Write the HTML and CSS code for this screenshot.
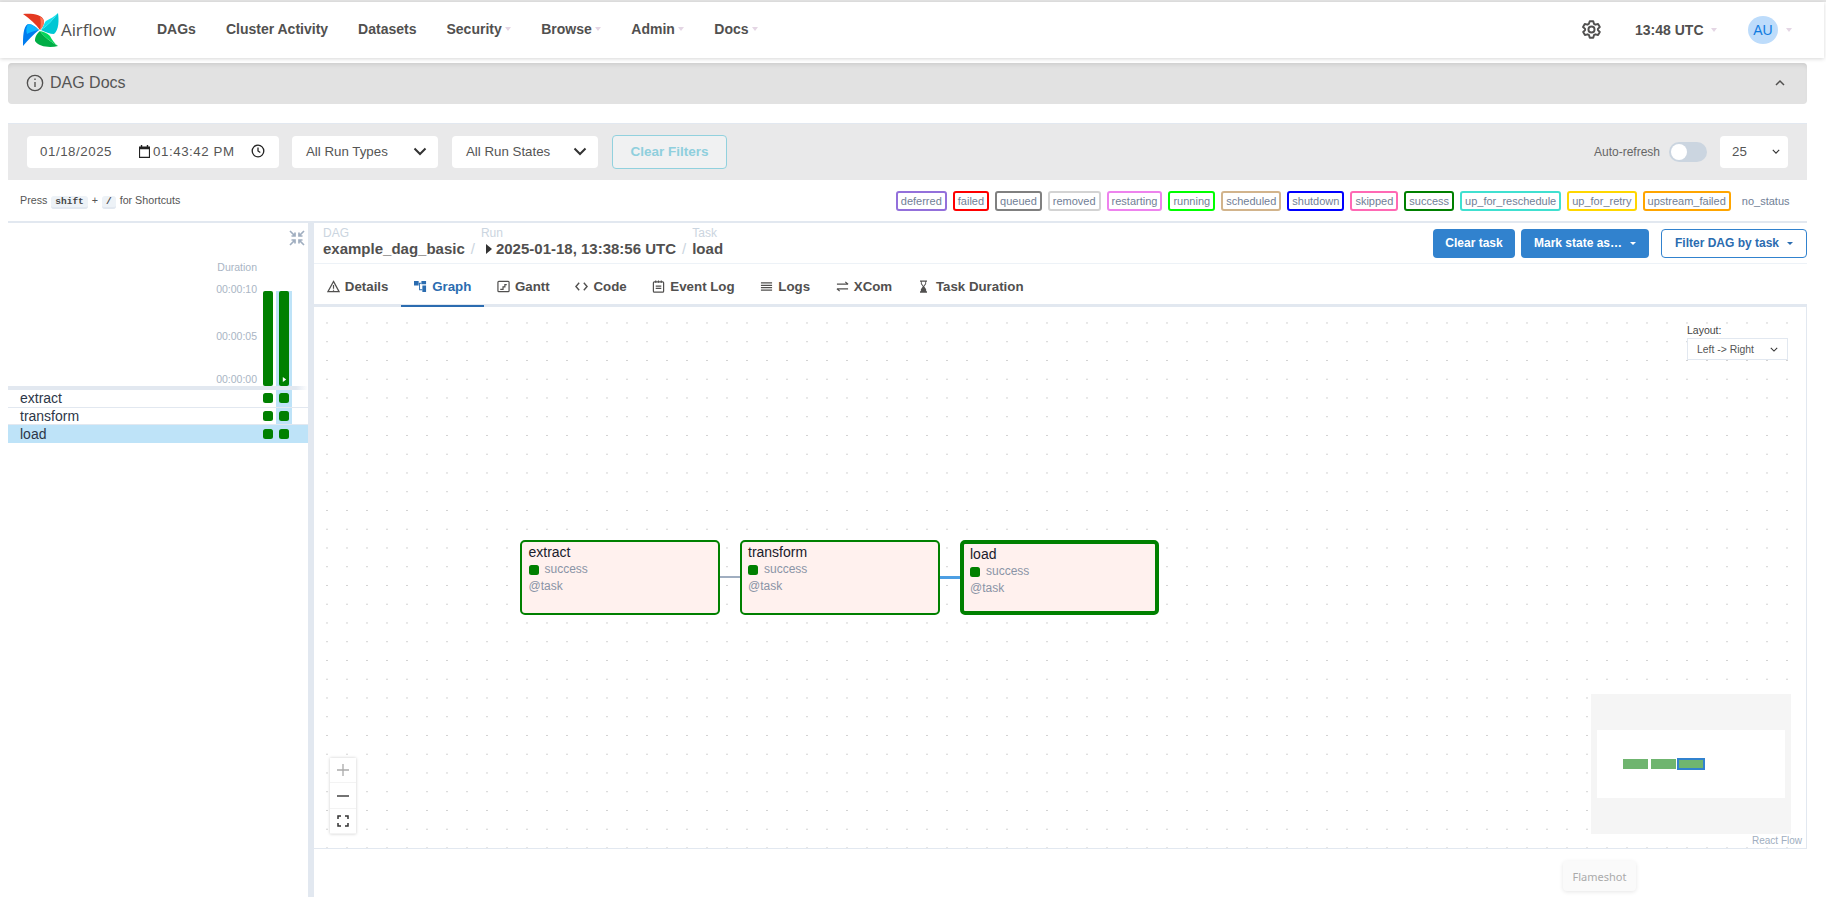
FILE: index.html
```html
<!DOCTYPE html>
<html lang="en">
<head>
<meta charset="utf-8">
<title>Airflow</title>
<link rel="stylesheet" href="styles.css">
</head>
<body>
<div class="strip"></div>
<nav class="nav">
  <a class="brand">
    <svg class="logo" viewBox="0 0 36 34">
      <path fill="#e43921" d="M0 1 C7 0 20 1 21 8 C21 11 20 14 17 17 C13 11 7 6 0 1Z"/>
      <path fill="#ff7557" d="M17 17 C20 14 21 11 21 8 C20.500 6 19 5 17 4 C18 8 18 12 17 17Z"/>
      <path fill="#00c7d4" d="M35 0 C36 7 36 17 31 21 C27 21 22 19 18 17 C24 13 30 7 35 0Z"/>
      <path fill="#11e1ee" d="M35 0 C30 7 24 13 18 17 C21 13 21 10 23 8 C27 6 32 3 35 0Z"/>
      <path fill="#00ad46" d="M35 33 C27 35 16 34 12 28 C12 25 13 21 17 18 C21 24 28 29 35 33Z"/>
      <path fill="#04d659" d="M35 33 C28 29 21 24 17 18 C21 19 24 20 27 23 C29 27 32 31 35 33Z"/>
      <path fill="#017cee" d="M0 33 C0 25 0 13 5 11 C9 11 13 14 16 17 C11 21 5 27 0 33Z"/>
      <path fill="#0cb6ff" d="M5 11 C9 11 13 14 16 17 C11 18 7 19 4 21 C3 18 3 14 5 11Z"/>
    </svg>
    <span class="brand-name">Airflow</span>
  </a>
  <ul class="menu">
    <li class="menu-item">DAGs</li>
    <li class="menu-item">Cluster Activity</li>
    <li class="menu-item">Datasets</li>
    <li class="menu-item">Security<i class="caret"></i></li>
    <li class="menu-item">Browse<i class="caret"></i></li>
    <li class="menu-item">Admin<i class="caret"></i></li>
    <li class="menu-item">Docs<i class="caret"></i></li>
  </ul>
  <div class="nav-right">
    <svg class="gear" viewBox="0 0 24 24" fill="none" stroke="#51504f" stroke-width="2.200" stroke-linejoin="round">
      <path d="M10 2.500h4l.8 3 1.700 1 3-.8 2 3.400-2.200 2.200v1.400l2.200 2.200-2 3.400-3-.8-1.700 1-.8 3h-4l-.8-3-1.700-1-3 .8-2-3.400 2.200-2.200v-1.400L2.300 9.100l2-3.400 3 .8 1.700-1z"/>
      <circle cx="12" cy="12" r="3.500"/>
    </svg>
    <span class="clock">13:48 UTC<i class="caret"></i></span>
    <span class="avatar">AU</span><i class="caret"></i>
  </div>
</nav>
<main class="main">
  <div class="docs">
    <svg class="info" viewBox="0 0 20 20" fill="none" stroke="#51504f" stroke-width="1.500"><circle cx="10" cy="10" r="8.500"/><path d="M10 9v5.500M10 5v1.700"/></svg>
    <span class="docs-title">DAG Docs</span>
    <svg class="chev-up" viewBox="0 0 12 8" fill="none" stroke="#51504f" stroke-width="1.500"><path d="M2 6l4-4 4 4"/></svg>
  </div>
  <div class="filters">
    <div class="field datetime">
      <span>01/18/2025</span>
      <svg class="cal" viewBox="0 0 12 14"><path fill="#222" d="M2 0h1.500v1.500h5V0H10v1.500h2V14H0V1.500h2zM1.200 4.500v8.300h9.600V4.500z"/></svg>
      <span class="time">01:43:42 PM</span>
      <svg class="clk" viewBox="0 0 14 14" fill="none" stroke="#222" stroke-width="1.300"><circle cx="7" cy="7" r="5.800"/><path d="M7 3.500V7l2.300 1.500"/></svg>
    </div>
    <div class="field select">All Run Types<svg class="chev" viewBox="0 0 14 9" fill="none" stroke="#333" stroke-width="2"><path d="M1.500 1.500L7 7l5.500-5.500"/></svg></div>
    <div class="field select">All Run States<svg class="chev" viewBox="0 0 14 9" fill="none" stroke="#333" stroke-width="2"><path d="M1.500 1.500L7 7l5.500-5.500"/></svg></div>
    <button class="clear-filters">Clear Filters</button>
    <span class="refresh-label">Auto-refresh</span>
    <span class="switch"><i class="knob"></i></span>
    <div class="field count">25<svg class="chev-s" viewBox="0 0 10 6" fill="none" stroke="#333" stroke-width="1.400"><path d="M1 1l4 4 4-4"/></svg></div>
  </div>
  <div class="legend-row">
    <div class="shortcut">Press <kbd>shift</kbd> + <kbd>/</kbd> for Shortcuts</div>
    <div class="legend">
      <span class="st st-deferred">deferred</span>
      <span class="st st-failed">failed</span>
      <span class="st st-queued">queued</span>
      <span class="st st-removed">removed</span>
      <span class="st st-restarting">restarting</span>
      <span class="st st-running">running</span>
      <span class="st st-scheduled">scheduled</span>
      <span class="st st-shutdown">shutdown</span>
      <span class="st st-skipped">skipped</span>
      <span class="st st-success">success</span>
      <span class="st st-reschedule">up_for_reschedule</span>
      <span class="st st-retry">up_for_retry</span>
      <span class="st st-upstream">upstream_failed</span>
      <span class="st st-none">no_status</span>
    </div>
  </div>
  <div class="workspace">
    <section class="grid">
      <div class="grid-tools">
        <svg class="collapse" viewBox="0 0 16 16" fill="none" stroke="#a0aec0" stroke-width="1.700"><path d="M1 1l5 5M6 2.500V6H2.500M15 1l-5 5M10 2.500V6h3.500M1 15l5-5M6 13.500V10H2.500M15 15l-5-5M10 13.500V10h3.500"/></svg>
      </div>
      <div class="chart">
        <div class="axis">
          <span class="axis-title">Duration</span>
          <span class="tick tick-top">00:00:10</span>
          <span class="tick tick-mid">00:00:05</span>
          <span class="tick tick-end">00:00:00</span>
        </div>
        <div class="col"><div class="bar"></div></div>
        <div class="col col-on"><div class="bar"><svg class="bar-play" viewBox="0 0 6 6"><path fill="#fff" d="M1 0l4 3-4 3z"/></svg></div></div>
      </div>
      <div class="grid-sep"></div>
      <div class="task-row"><span class="task-name">extract</span><span class="cell"><i class="sq"></i></span><span class="cell cell-on"><i class="sq"></i></span></div>
      <div class="task-row"><span class="task-name">transform</span><span class="cell"><i class="sq"></i></span><span class="cell cell-on"><i class="sq"></i></span></div>
      <div class="task-row task-row-on"><span class="task-name">load</span><span class="cell"><i class="sq"></i></span><span class="cell cell-on"><i class="sq"></i></span></div>
    </section>
    <div class="splitter"></div>
    <section class="detail">
      <header class="crumb-bar">
        <div class="crumbs">
          <div class="crumb"><small>DAG</small><b>example_dag_basic</b></div>
          <span class="slash slash-a">/</span>
          <div class="crumb crumb-run"><small>Run</small><b><svg class="play" viewBox="0 0 6 10"><path fill="#333" d="M0 0l6 5-6 5z"/></svg>2025-01-18, 13:38:56 UTC</b></div>
          <span class="slash">/</span>
          <div class="crumb"><small>Task</small><b>load</b></div>
        </div>
        <div class="actions">
          <button class="btn btn-solid">Clear task</button>
          <button class="btn btn-solid btn-mark">Mark state as…<i class="btn-caret"></i></button>
          <button class="btn btn-outline">Filter DAG by task<i class="btn-caret"></i></button>
        </div>
      </header>
      <div class="tabs">
        <span class="tab"><svg viewBox="0 0 14 14" fill="none" stroke="#51504f" stroke-width="1.300"><path d="M7 1.500l6 11H1z"/><path d="M7 5.500v4M7 10.500v1"/></svg>Details</span>
        <span class="tab tab-on"><svg viewBox="0 0 14 14" fill="#2b6cb0"><path d="M0 1h5v5H0zM8 1h5v3.500H8zM9 6h4v7H9z"/><path d="M5 3h3v1H6.500v6H9v1H5.500V4H5z"/></svg>Graph</span>
        <span class="tab"><svg viewBox="0 0 14 14" fill="none" stroke="#51504f" stroke-width="1.300"><rect x="1" y="1.500" width="12" height="11" rx="1"/><path d="M3.500 10h3v-2.500h2V5h2"/></svg>Gantt</span>
        <span class="tab"><svg viewBox="0 0 14 14" fill="none" stroke="#51504f" stroke-width="1.500"><path d="M4.500 3L1 7l3.500 4M9.500 3L13 7l-3.500 4"/></svg>Code</span>
        <span class="tab"><svg viewBox="0 0 14 14" fill="none" stroke="#51504f" stroke-width="1.300"><rect x="1.500" y="2" width="11" height="11" rx="1"/><path d="M4 .5v2.500M7 .5v2.500M10 .5v2.500M4 6.500h6M4 9h6"/></svg>Event Log</span>
        <span class="tab"><svg viewBox="0 0 14 14" fill="none" stroke="#51504f" stroke-width="1.300"><path d="M1 3h12M1 5.700h12M1 8.300h12M1 11h12"/></svg>Logs</span>
        <span class="tab"><svg viewBox="0 0 14 14" fill="none" stroke="#51504f" stroke-width="1.300"><path d="M1 4.500h12M10 2l3 2.500M1 9.500h12M4 12L1 9.500"/></svg>XCom</span>
        <span class="tab"><svg class="hourglass" viewBox="0 0 8 14"><path fill="#51504f" d="M0 0h8v1.500H7V4L4.800 7 7 10v2.500h1V14H0v-1.500h1V10l2.200-3L1 4V1.500H0zM2 1.500V3.700L4 6.400l2-2.700V1.500z"/></svg>Task Duration</span>
      </div>
      <div class="canvas">
        <div class="layout-box">
          <label class="layout-label">Layout:</label>
          <div class="layout-select">Left -&gt; Right<svg class="chev-s" viewBox="0 0 10 6" fill="none" stroke="#333" stroke-width="1.300"><path d="M1 1l4 4 4-4"/></svg></div>
        </div>
        <div class="edge edge-a"></div>
        <div class="edge edge-b"></div>
        <div class="node node-1"><div class="node-name">extract</div><div class="node-state"><i class="sq sq-node"></i>success</div><div class="node-op">@task</div></div>
        <div class="node node-2"><div class="node-name">transform</div><div class="node-state"><i class="sq sq-node"></i>success</div><div class="node-op">@task</div></div>
        <div class="node node-3"><div class="node-name">load</div><div class="node-state"><i class="sq sq-node"></i>success</div><div class="node-op">@task</div></div>
        <div class="controls">
          <span class="ctl"><svg viewBox="0 0 12 12" fill="none" stroke="#aaa" stroke-width="1.300"><path d="M6 0v12M0 6h12"/></svg></span>
          <span class="ctl"><svg viewBox="0 0 12 12" fill="none" stroke="#444" stroke-width="1.500"><path d="M0 6h12"/></svg></span>
          <span class="ctl"><svg viewBox="0 0 12 12" fill="none" stroke="#333" stroke-width="1.500"><path d="M1 4V1h3M8 1h3v3M11 8v3H8M4 11H1V8"/></svg></span>
        </div>
        <div class="minimap">
          <div class="mini-view">
            <i class="mini-node mini-1"></i><i class="mini-node mini-2"></i><i class="mini-node mini-3"></i>
          </div>
        </div>
        <span class="attribution">React Flow</span>
      </div>
      <div class="tooltip">Flameshot</div>
    </section>
  </div>
</main>
</body>
</html>
```
FILE: styles.css
```css
* { box-sizing: border-box; }
html, body { margin: 0; height: 897px; overflow: hidden; background: #fff; }
body { font-family: "Liberation Sans", Arial, sans-serif; color: #51504f; font-size: 14px; }

.strip { height: 2px; background: #e4e4e4; }
.nav {
  height: 56px; width: 1824px; display: flex; align-items: center; background: #fff;
  box-shadow: 0 1px 4px rgba(0,0,0,.16); position: relative; z-index: 2;
}
.brand { display: flex; align-items: center; margin-left: 23px; width: 134px; }
.logo { width: 36px; height: 34px; display: block; }
.brand-name { font-size: 17px; margin-left: 2px; margin-top: -2px; color: #51504f; font-family: "Open Sans", sans-serif; letter-spacing: -.1px; }
.menu { display: flex; list-style: none; padding: 0; margin: -2px 0 0; gap: 30px; font-weight: 700; font-size: 14px; }
.menu-item { display: flex; align-items: center; white-space: nowrap; }
.caret { display: inline-block; width: 0; height: 0; margin-left: 3.500px; border: 3.500px solid transparent; border-top: 4px solid #e4d6e4; border-bottom: 0; }
.nav-right { margin-left: auto; display: flex; align-items: center; padding-right: 32px; margin-top: -1px; }
.gear { width: 21px; height: 21px; margin-right: 33px; }
.clock { font-weight: 700; font-size: 14px; margin-right: 31.500px; white-space: nowrap; display: flex; align-items: center; }
.clock .caret { margin-left: 7px; }
.avatar { width: 30px; height: 28px; border-radius: 50%; background: #bddcfb; color: #0f7be0; font-size: 14px; display: flex; align-items: center; justify-content: center; }
.avatar + .caret { margin-left: 8px; }

.main { padding: 0 19px 0 8px; }
.docs {
  margin-top: 5px; height: 41px; background: #e2e2e2; border-radius: 4px; display: flex; align-items: center;
  padding: 0 21px 2px 18px; box-shadow: inset 0 4px 5px -3px rgba(0,0,0,.12);
}
.info { width: 18px; height: 18px; margin-right: 6px; }
.docs-title { font-size: 16px; color: #555; }
.chev-up { width: 12px; height: 8px; margin-left: auto; }

.filters { margin-top: 19px; height: 57px; background: #e9e9ea; display: flex; align-items: center; padding: 0 19px 0 19px; border-top: 1px solid #e2e8f0; }
.field { background: #fff; height: 32px; border-radius: 4px; display: flex; align-items: center; font-size: 13.300px; color: #555; padding-bottom: 2px; }
.datetime { width: 252px; padding: 0 14px 2px 13px; margin-right: 13px; letter-spacing: .55px; }
.cal { width: 11px; height: 13px; margin-left: 27px; }
.time { margin-left: 3px; }
.clk { width: 14px; height: 14px; margin-left: auto; }
.select { width: 146px; padding: 0 11px 2px 14px; margin-right: 14px; justify-content: space-between; }
.chev { width: 14px; height: 9px; }
.clear-filters { width: 115px; height: 34px; background: #f0f1f2; border: 1px solid #91d1de; border-radius: 4px; color: #8fcfdd; font: 700 13.500px "Liberation Sans", Arial, sans-serif; padding: 0 0 2px; }
.refresh-label { margin-left: auto; font-size: 12px; margin-right: 9px; color: #666; }
.switch { width: 38px; height: 20px; border-radius: 10px; background: #cbd5e0; padding: 2px; margin-right: 13px; display: block; }
.knob { display: block; width: 16px; height: 16px; background: #fff; border-radius: 50%; }
.count { width: 68px; padding: 0 8px 2px 12px; justify-content: space-between; }
.chev-s { width: 8px; height: 5px; }

.legend-row { height: 41px; display: flex; align-items: center; justify-content: space-between; padding: 0 12.500px 0 12px; }
.shortcut { font-size: 10.700px; color: #555; white-space: nowrap; }
kbd { font: 700 9.500px "Liberation Mono", monospace; background: #edf2f7; border-radius: 3px; border-bottom: 2px solid #e2e8f0; padding: 0 4px; margin: 0 1px; color: #444; }
.legend { display: flex; gap: 6px; }
.st { height: 20px; border: 2px solid; border-radius: 3px; font-size: 11px; line-height: 16px; padding: 0 3px; color: #718096; white-space: nowrap; }
.st-deferred { border-color: #9370db; }
.st-failed { border-color: #f00; }
.st-queued { border-color: #808080; }
.st-removed { border-color: #d3d3d3; }
.st-restarting { border-color: #ee82ee; }
.st-running { border-color: #0f0; }
.st-scheduled { border-color: #d2b48c; }
.st-shutdown { border-color: #00f; }
.st-skipped { border-color: #ff69b4; }
.st-success { border-color: #008000; }
.st-reschedule { border-color: #40e0d0; }
.st-retry { border-color: #ffd700; }
.st-upstream { border-color: #ffa500; }
.st-none { border-color: transparent; }

.workspace { display: flex; height: 676px; border-top: 2px solid #e2e8f0; }
.grid { width: 300px; flex: none; }
.grid-tools { height: 23px; display: flex; justify-content: flex-end; align-items: flex-end; padding-right: 3px; }
.collapse { width: 16px; height: 16px; display: block; }
.chart { height: 140px; display: flex; justify-content: flex-end; padding-right: 16px; gap: 0; }
.axis { flex: 1; position: relative; font-size: 10.500px; line-height: 12px; color: #a9b5c4; }
.axis-title { position: absolute; top: 15px; right: 3px; }
.tick { position: absolute; right: 3px; }
.tick-top { top: 37px; }
.tick-mid { top: 84px; }
.tick-end { top: 127px; }
.col { width: 16px; padding: 45px 3px 0; margin-top: 0; }
.col-on { background: linear-gradient(#fff 45px, #bee3f8 45px); }
.bar { height: 95px; background: #008000; border-radius: 2px; position: relative; }
.bar-play { position: absolute; width: 5px; height: 5px; left: 3px; bottom: 4px; }
.grid-sep { height: 4px; background: linear-gradient(90deg, #e2e8f0 96%, #fff); }
.task-row { height: 17.500px; display: flex; align-items: center; padding-right: 16px; border-bottom: 1px solid #e2e8f0; }
.task-row-on { background: #bee3f8; border-bottom: 0; height: 18px; }
.task-name { flex: 1; padding-left: 12px; font-size: 14px; color: #2d3748; }
.cell { width: 16px; height: 100%; display: flex; align-items: center; justify-content: center; }
.cell-on { background: #bee3f8; }
.sq { display: block; width: 10px; height: 10px; flex: none; background: #008000; border-radius: 2.500px; }

.splitter { width: 6px; flex: none; background: #e2e8f0; }
.detail { flex: 1; position: relative; min-width: 0; }
.crumb-bar { height: 41px; display: flex; align-items: center; justify-content: space-between; border-bottom: 1px solid #edf2f7; padding-left: 9px; }
.crumbs { display: flex; align-items: flex-end; margin-top: -2px; }
.crumb { display: flex; flex-direction: column; line-height: 13px; }
.crumb small { font-size: 12px; color: #cbd5e0; line-height: 13px; }
.crumb b { font-size: 15px; line-height: 17px; color: #51504f; display: flex; align-items: center; white-space: nowrap; }
.crumb-run b { padding-left: 5px; }
.slash { color: #cbd5e0; font-size: 15px; margin: 0 6px; line-height: 17px; }
.slash-a { margin-right: 6px; }
.play { width: 6px; height: 10px; margin-right: 4px; }
.actions { display: flex; gap: 6px; align-items: center; }
.btn { height: 29px; border-radius: 4px; font: 700 12px "Liberation Sans", Arial, sans-serif; padding: 0; display: flex; align-items: center; justify-content: center; }
.btn-solid { background: #3182ce; color: #fff; border: 0; width: 82px; }
.btn-mark { width: 128px; }
.btn-outline { background: #fff; border: 1px solid #3182ce; color: #2b6cb0; width: 146px; margin-left: 6px; }
.btn-caret { margin-left: 8px; width: 0; height: 0; border: 3px solid transparent; border-top: 3px solid currentColor; border-bottom: 0; }
.tabs { height: 43px; display: flex; align-items: flex-end; border-bottom: 3px solid #e2e8f0; font-weight: 700; font-size: 13.300px; }
.tab { height: 41px; margin-bottom: -3px; padding: 2px 12.850px 0; display: flex; align-items: center; gap: 5px; border-bottom: 2px solid transparent; white-space: nowrap; }
.tab svg { width: 13px; height: 13px; flex: none; }
.tab-on { color: #2b6cb0; border-bottom-color: #2b6cb0; }
.tab .hourglass { width: 7px; margin: 0 4px 0 2px; }

.canvas {
  position: relative; height: 542px; border-right: 1px solid #e2e8f0; border-bottom: 1px solid #e2e8f0;
  background-color: #fff;
  background-image: radial-gradient(circle, #d2d2d2 .7px, transparent 1.100px);
  background-size: 20px 18.750px; background-position: 3px 6.600px;
}
.layout-box { position: absolute; top: 16px; right: 18px; width: 101px; }
.layout-label { display: block; font-size: 10.500px; line-height: 14px; color: #444; margin-bottom: 1px; }
.layout-select { height: 22px; background: #fff; border: 1px solid #e2e8f0; display: flex; align-items: center; justify-content: space-between; font-size: 10.400px; padding: 0 9px 0 9px; color: #555; }
.node { position: absolute; width: 200px; height: 75px; border: 2px solid #008000; border-radius: 5px; background: #fff1ee; padding: 2px 6px; top: 233px; }
.node-1 { left: 205.500px; padding-left: 7px; }
.node-2 { left: 426px; }
.node-3 { left: 646px; border-width: 4px; padding: 2px 6px; width: 199px; }
.node-name { font-size: 14px; line-height: 17px; color: #1a202c; }
.node-state { display: flex; align-items: center; font-size: 12px; color: #8a94a6; height: 16px; }
.sq-node { margin-right: 6px; margin-top: 1px; }
.node-op { font-size: 12px; color: #8a94a6; line-height: 17px; margin-top: 1px; }
.edge { position: absolute; top: 269px; width: 21px; }
.edge-a { left: 405px; height: 2px; background: #a0aec0; }
.edge-b { left: 626px; height: 3px; background: #4d9fe3; }
.controls { position: absolute; left: 16px; bottom: 14px; width: 26px; box-shadow: 0 0 3px rgba(0,0,0,.2); background: #fff; }
.ctl { height: 25.300px; display: flex; align-items: center; justify-content: center; border-bottom: 1px solid #f3f3f3; background: #fff; }
.ctl svg { width: 12px; height: 12px; }
.minimap { position: absolute; right: 15px; bottom: 14px; width: 200px; height: 140px; background: #f5f5f5; padding: 36px 6px 0; }
.mini-view { height: 68px; background: #fff; position: relative; }
.mini-node { position: absolute; top: 29px; height: 10px; width: 25px; background: #6fb56f; }
.mini-1 { left: 26px; }
.mini-2 { left: 54px; }
.mini-3 { left: 81px; width: 26px; outline: 2px solid #3182ce; outline-offset: -1px; }
.attribution { position: absolute; right: 3px; bottom: 2px; font-size: 10px; color: #a0aec0; background: rgba(255,255,255,.6); padding: 0 1px; }
.tooltip { position: absolute; left: 1249px; top: 638px; width: 73px; height: 30px; background: #fafafa; border-radius: 4px; box-shadow: 0 1px 4px rgba(0,0,0,.1); color: #aaa; font: 11px "Noto Sans", sans-serif; display: flex; align-items: center; justify-content: center; }
```
